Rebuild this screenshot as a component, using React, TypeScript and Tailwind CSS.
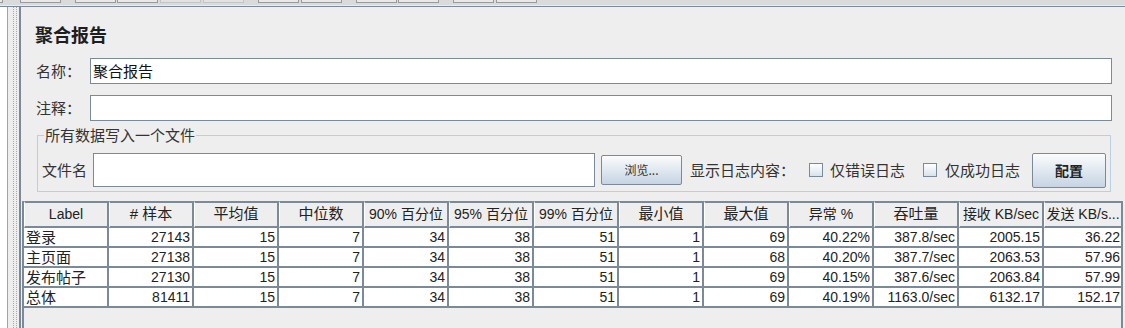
const columns = [
  "Label",
  "# 样本",
  "平均值",
  "中位数",
  "90% 百分位",
  "95% 百分位",
  "99% 百分位",
  "最小值",
  "最大值",
  "异常 %",
  "吞吐量",
  "接收 KB/sec",
  "发送 KB/s...",
];

const rows = [
  ["登录", "27143", "15", "7", "34", "38", "51", "1", "69", "40.22%", "387.8/sec", "2005.15", "36.22"],
  ["主页面", "27138", "15", "7", "34", "38", "51", "1", "68", "40.20%", "387.7/sec", "2063.53", "57.96"],
  ["发布帖子", "27130", "15", "7", "34", "38", "51", "1", "69", "40.15%", "387.6/sec", "2063.84", "57.99"],
  ["总体", "81411", "15", "7", "34", "38", "51", "1", "69", "40.19%", "1163.0/sec", "6132.17", "152.17"],
];

function Toolbar() {
  return (
    <div className="h-[7px] shrink-0 bg-[#dadada] border-b border-[#7a8a99] flex flex-col">
      <div className="h-[3px] flex items-start">
        <div className="w-[3px] h-[3px] border-r border-b border-[#9a9a9a] bg-[#e8e8e8]" />
        <div className="ml-[17px] w-[41px] h-[3px] border-x border-b border-[#9a9a9a] bg-[#e8e8e8]" />
        <div className="ml-[14px] w-[41px] h-[3px] border-x border-b border-[#9a9a9a] bg-[#e8e8e8]" />
        <div className="ml-[1px] w-[41px] h-[3px] border-x border-b border-[#9a9a9a] bg-[#e8e8e8]" />
        <div className="ml-[2px] w-[41px] h-[3px] border-x border-b border-[#c4c4c4] bg-[#e2e2e2]" />
        <div className="ml-[2px] w-[41px] h-[3px] border-x border-b border-[#c4c4c4] bg-[#e2e2e2]" />
        <div className="ml-[14px] w-[41px] h-[3px] border-x border-b border-[#9a9a9a] bg-[#e8e8e8]" />
        <div className="ml-[2px] w-[41px] h-[3px] border-x border-b border-[#9a9a9a] bg-[#e8e8e8]" />
        <div className="ml-[14px] w-[41px] h-[3px] border-x border-b border-[#9a9a9a] bg-[#e8e8e8]" />
        <div className="ml-[1px] w-[41px] h-[3px] border-x border-b border-[#9a9a9a] bg-[#e8e8e8]" />
        <div className="ml-[14px] w-[41px] h-[3px] border-x border-b border-[#9a9a9a] bg-[#e8e8e8]" />
        <div className="ml-[2px] w-[41px] h-[3px] border-x border-b border-[#9a9a9a] bg-[#e8e8e8]" />
      </div>
      <div className="flex-1" />
      <div className="h-[1px] bg-[#ececec]" />
    </div>
  );
}

function Checkbox() {
  return (
    <span className="shrink-0 w-[14px] h-[14px] border border-[#7a8a99] bg-linear-to-b from-white to-[#d8e2ec]" />
  );
}

const cjk = "font-['Noto_Sans_CJK_SC',sans-serif]";

export default function App() {
  return (
    <div className="w-[1125px] h-[328px] overflow-hidden bg-[#eeeeee] flex flex-col text-[14px] text-[#222] font-['Liberation_Sans','Noto_Sans_CJK_SC',sans-serif]">
      <Toolbar />
      <div className="flex flex-1 min-h-0">
        {/* tree panel edge */}
        <div className="shrink-0 w-[8px] bg-white border-r border-[#9aa5b1]" />
        {/* split pane divider */}
        <div className="shrink-0 w-[11px] pl-[5px]">
          <div className="w-[4px] h-full border-x border-dotted border-[#a8a8a8]" />
        </div>

        {/* main panel */}
        <div className="flex-1 min-w-0 flex flex-col border-l-2 border-[#7a8a99]">
          <h1 className={"mt-[14px] pl-[14px] h-[26px] leading-[26px] text-[18px] font-bold text-[#1e1e1e] " + cjk}>
            聚合报告
          </h1>

          <div className={"mt-[11px] flex items-center h-[26px] mr-[13px] text-[15px] " + cjk}>
            <span className="w-[69px] pl-[15px] text-[#333]">名称：</span>
            <div className="flex-1 h-full bg-white border border-[#7a8a99] pl-[2px] flex items-center text-[15px] text-[#111]">
              聚合报告
            </div>
          </div>

          <div className={"mt-[11px] flex items-center h-[26px] mr-[13px] text-[15px] " + cjk}>
            <span className="w-[69px] pl-[15px] text-[#333]">注释：</span>
            <div className="flex-1 h-full bg-white border border-[#7a8a99]" />
          </div>

          <fieldset className={"mt-[6px] ml-[16px] mr-[14px] border border-[#b8cfe5] pl-[4px] pr-[3px] pt-[10px] pb-[4px] text-[15px] text-[#333] " + cjk}>
            <legend className="ml-[2px] px-[1px] leading-[16px]">所有数据写入一个文件</legend>
            <div className="flex items-center h-[34px]">
              <span className="w-[51px] shrink-0">文件名</span>
              <div className="shrink-0 w-[502px] h-[34px] bg-white border border-[#7a8a99]" />
              <button className="shrink-0 ml-[6px] w-[81px] h-[30px] rounded-[2px] border border-[#7a8a99] bg-linear-to-b from-[#fbfcfd] to-[#c6d4e3] text-[12px] text-[#333]">
                浏览...
              </button>
              <span className="ml-[8px] shrink-0">显示日志内容：</span>
              <span className="ml-[14px] flex items-center">
                <Checkbox />
              </span>
              <span className="ml-[7px] shrink-0">仅错误日志</span>
              <span className="ml-[18px] flex items-center">
                <Checkbox />
              </span>
              <span className="ml-[8px] shrink-0">仅成功日志</span>
              <button className="shrink-0 ml-[12px] w-[74px] h-[35px] rounded-[2px] border border-[#7a8a99] bg-linear-to-b from-[#fbfcfd] to-[#c6d4e3] text-[14px] font-bold text-[#222]">
                配置
              </button>
            </div>
          </fieldset>

          {/* results table */}
          <div className="mt-[9px] ml-[1px] mr-[2px] flex-1 border-x-2 border-[#7a8a99]">
            <table className="table-fixed border-separate border-spacing-0 w-[1097px]">
              <colgroup>
                {columns.map((c, i) => (
                  <col key={c} className={i === 12 ? "w-[77px]" : "w-[85px]"} />
                ))}
              </colgroup>
              <thead>
                <tr>
                  {columns.map((c, i) => (
                    <th
                      key={c}
                      className={
                        "h-[27px] p-0 font-normal text-center whitespace-nowrap bg-[#eeeeee] text-[#222] border-t-2 border-b-2 border-l border-l-white border-[#7a8a99] " +
                        (/^[#\u4e00-\u9fff ]+$/.test(c) ? "text-[15px] " : "text-[14px] ") +
                        (i === 12 ? "" : "border-r-2")
                      }
                    >
                      {c}
                    </th>
                  ))}
                </tr>
              </thead>
              <tbody>
                {rows.map((r) => (
                  <tr key={r[0]}>
                    {r.map((v, i) => (
                      <td
                        key={i}
                        className={
                          "h-[20px] p-0 leading-[18px] bg-white border-b-2 border-[#7a8a99] whitespace-nowrap " +
                          (i === 0
                            ? "text-left pl-[2px] text-[15px] border-r-2 " + cjk
                            : i === 12
                            ? "text-right pr-[1px]"
                            : "text-right pr-[2px] border-r-2")
                        }
                      >
                        {v}
                      </td>
                    ))}
                  </tr>
                ))}
              </tbody>
            </table>
          </div>
        </div>
      </div>
    </div>
  );
}
